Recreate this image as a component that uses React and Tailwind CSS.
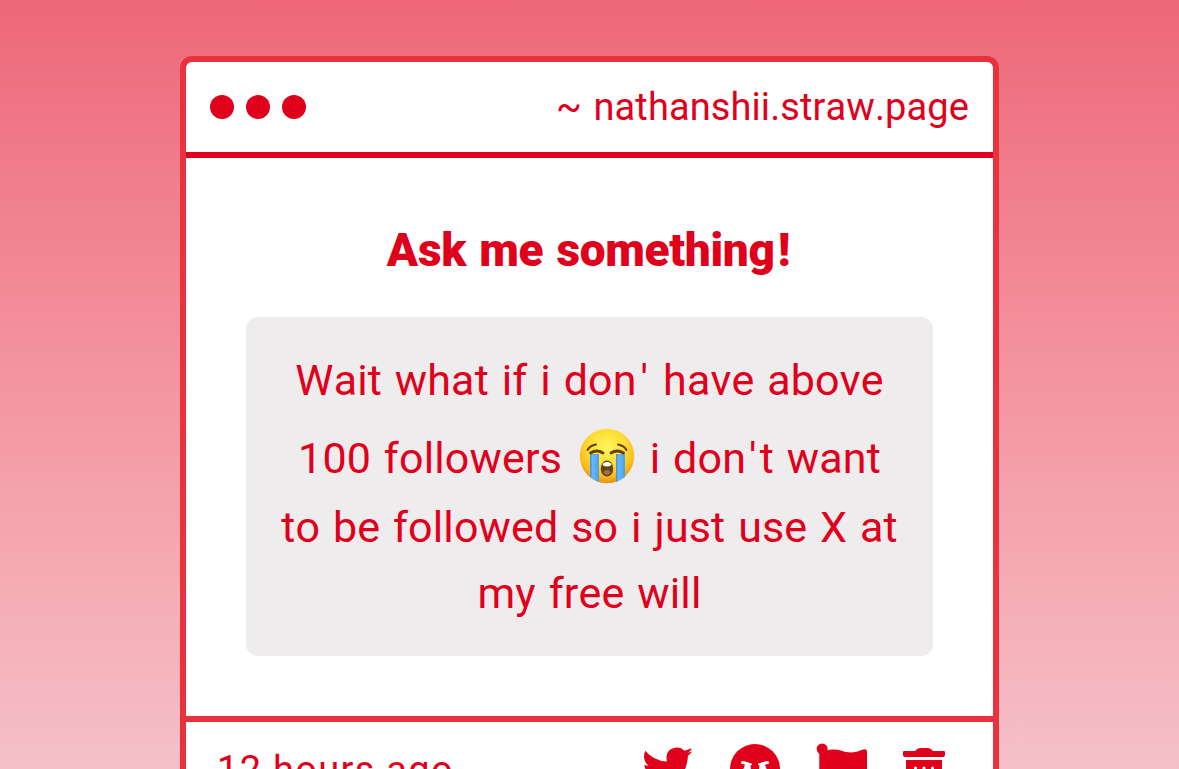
const iconStyles = "h-[52px] w-[52px] fill-current";

function TwitterIcon() {
  return (
    <svg viewBox="0 0 52 52" className={iconStyles}>
      <path d="M50.5 5.3 Q48.7 7.9 45.9 9.8 C47 27 34 47 14.5 47 Q7 47 1 43.3 Q9 43.5 15.5 39.3 Q8.5 38 6.2 32 Q8.7 32.3 10.6 31.5 Q2.7 29 2.5 21.7 Q4.5 22.7 6.7 22.7 C1.8 19 1 13 3.2 7.7 Q11.5 17.7 24.9 18.6 C23 9 28.7 4.5 35 4.5 Q39.5 4.6 42.3 7.8 Q46 7 48.8 5.2 Q47.7 8.5 44.5 10 Q48 9.5 50.5 8.3 L45.9 13 L45 8 Z" />
    </svg>
  );
}

function AngryIcon() {
  return (
    <svg viewBox="0 0 52 52" className={iconStyles}>
      <circle cx="26" cy="26" r="25" />
      <path d="M12 20.5 Q11.5 17.5 14.5 18 L22.5 20.5 Q24 22 21.5 22.5 L22 27 H14 L16 21.8 Z" fill="#fff" />
      <path d="M40 20.5 Q40.5 17.5 37.5 18 L29.5 20.5 Q28 22 30.5 22.5 L30 27 H38 L36 21.8 Z" fill="#fff" />
      <path d="M17 40 Q26 29 35 40" fill="none" stroke="#fff" strokeWidth="3.5" strokeLinecap="round" />
    </svg>
  );
}

function FlagIcon() {
  return (
    <svg viewBox="0 0 52 52" className={iconStyles}>
      <circle cx="6.2" cy="6" r="5.5" />
      <path d="M3.3 6 H9 V52 H3.3 Z" />
      <path d="M8 8 C15 6 20 6 25 7.5 C33 10.5 39 10 46 6.8 Q51 5 51 9 V34 C42 40 34 40 26 37 C20 35 14 35 8 38 Z" />
    </svg>
  );
}

function TrashIcon() {
  return (
    <svg viewBox="0 0 52 52" className={iconStyles}>
      <path d="M6 8 H17 Q19 5 22 5 H30 Q33 5 35 8 H46 Q47 8 47 9 V12 Q47 14 45 14 H7 Q5 14 5 12 V9 Q5 8 6 8 Z" />
      <path d="M8 17 H44 V46 Q44 51 39 51 H13 Q8 51 8 46 Z" />
      <path d="M17.5 25 V43 M26 25 V43 M34.5 25 V43" stroke="#fff" strokeWidth="3" strokeLinecap="round" />
    </svg>
  );
}

function CryingEmoji() {
  return (
    <svg viewBox="0 0 56 56" className="mr-0.5 ml-1 inline-block h-14 w-14 align-[-11px]" role="img" aria-label="Loudly crying face">
      <defs>
        <radialGradient id="face" cx="50%" cy="34%" r="67%">
          <stop offset="0" stopColor="#fff45c" />
          <stop offset="0.5" stopColor="#fedd35" />
          <stop offset="0.8" stopColor="#fbb91d" />
          <stop offset="1" stopColor="#e58a10" />
        </radialGradient>
        <linearGradient id="tear" x1="0" x2="1">
          <stop offset="0" stopColor="#3c91dc" />
          <stop offset="0.3" stopColor="#67b9fa" />
          <stop offset="1" stopColor="#4b9fe8" />
        </linearGradient>
      </defs>
      <circle cx="28" cy="28" r="27.2" fill="url(#face)" />
      <path d="M11 26 H20 V54 Q15 52 11 49 Z" fill="url(#tear)" />
      <path d="M37 26 H46 V49 Q42 52 37 54 Z" fill="url(#tear)" />
      <g fill="none" stroke="#6b3d08" strokeLinecap="round">
        <path d="M8.5 22 Q11 17.5 17 16.5" strokeWidth="2" />
        <path d="M39 16.5 Q45 17.5 47.5 22" strokeWidth="2" />
        <path d="M11.5 25 Q18 21 24 25" strokeWidth="2.8" />
        <path d="M32 25 Q38 21 44.5 25" strokeWidth="2.8" />
      </g>
      <ellipse cx="28" cy="40.5" rx="6.2" ry="8" fill="#69410c" />
      <path d="M23.5 37 Q24 34 28 34 Q32 34 32.5 37 Q28 40 23.5 37Z" fill="#fff" />
      <path d="M24 44 Q28 40 32 44 Q30 47 28 47 Q26 47 24 44Z" fill="#99744d" />
    </svg>
  );
}

export default function App() {
  return (
    <div className="h-[769px] overflow-hidden bg-linear-to-b from-[#ed6779] to-[#f5c0c8] pt-14 font-[Roboto,sans-serif] text-[#e0001b] [font-kerning:none]">
      <main className="mx-auto h-[900px] w-[819px] rounded-xl border-6 border-[#e8333f] bg-white">
        <header className="flex h-24 items-center justify-between border-b-6 border-[#e0001b] px-6">
          <div className="flex gap-3">
            <span className="size-6 rounded-full bg-[#e0001b]" />
            <span className="size-6 rounded-full bg-[#e0001b]" />
            <span className="size-6 rounded-full bg-[#e0001b]" />
          </div>
          <p className="text-[38px] leading-[48px] font-[450] tracking-[0.1px] [word-spacing:2px]">~ nathanshii.straw.page</p>
        </header>
        <section className="h-[558px] px-[60px] pt-[59px] text-center">
          <h1 className="pr-0.5 text-[46px] leading-[66px] font-black tracking-[-0.3px] [word-spacing:2px]">Ask me something<span className="ml-[3px]">!</span></h1>
          <div className="mt-[34px] h-[339px] rounded-xl bg-[#eeeced] pt-[30px] text-[43px] leading-[66px] font-[450] tracking-[0.15px] [word-spacing:2px] whitespace-nowrap">
            <p>Wait what if i don<span className="ml-1 mr-0.5">'</span> have above</p>
            <p className="pt-3">100 followers <CryingEmoji /> i don<span className="mx-[3px]">'</span>t want</p>
            <p className="pt-[3px]">to be followed so i just use X at</p>
            <p>my free will</p>
          </div>
        </section>
        <footer className="flex items-start justify-between border-t-6 border-[#e8333f] pt-[21px] pr-[43px] pl-[31px]">
          <p className="text-[38px] leading-[54px] font-[450] tracking-[1.3px]">12 hours ago</p>
          <div className="flex gap-[35px]">
            <TwitterIcon />
            <AngryIcon />
            <FlagIcon />
            <span className="-ml-[5px]"><TrashIcon /></span>
          </div>
        </footer>
      </main>
    </div>
  );
}
